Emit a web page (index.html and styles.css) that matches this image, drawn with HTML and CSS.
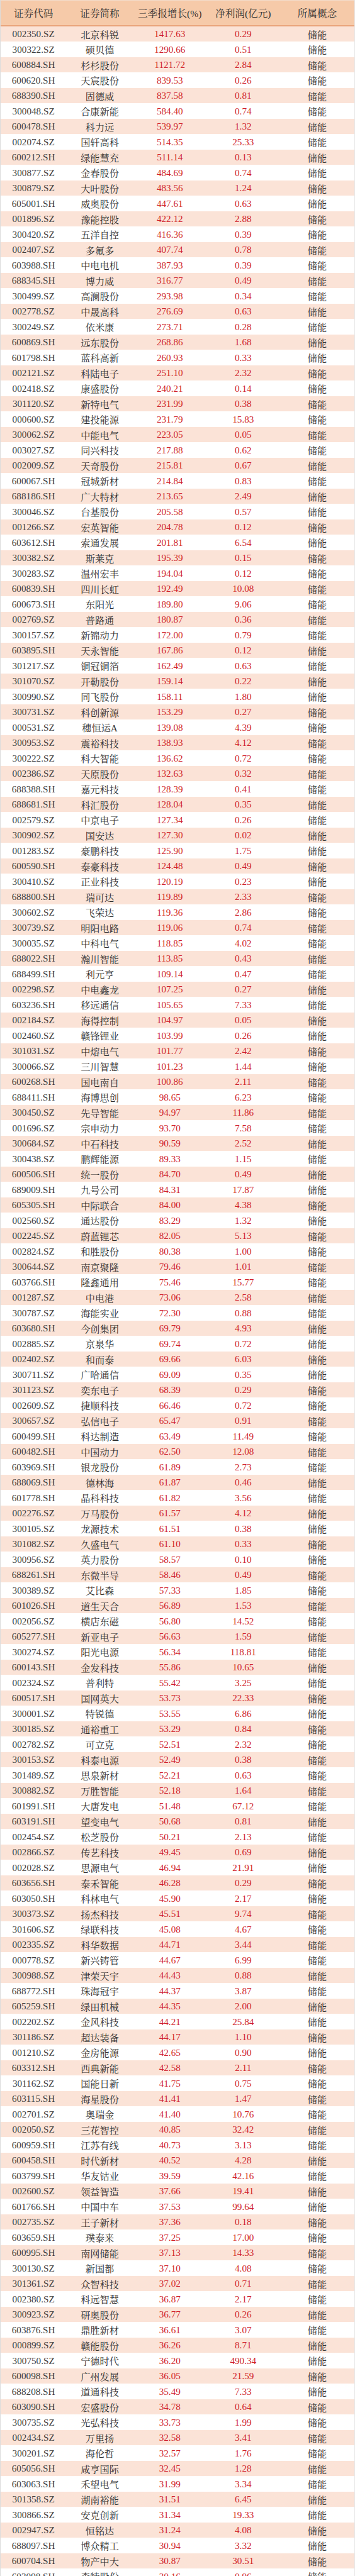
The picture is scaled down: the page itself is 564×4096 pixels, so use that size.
FILE: index.html
```html
<!DOCTYPE html>
<html lang="zh-CN">
<head>
<meta charset="utf-8">
<title>储能概念 三季报增长</title>
<link rel="stylesheet" href="styles.css">
</head>
<body>
<div class="page">
<div class="table">
<div class="head"><span>证券代码</span><span>证券简称</span><span>三季报增长(%)</span><span>净利润(亿元)</span><span>所属概念</span></div>
<div class="body">
<div class="r"><span>002350.SZ</span><span>北京科锐</span><span>1417.63</span><span>0.29</span><span>储能</span></div>
<div class="r"><span>300322.SZ</span><span>硕贝德</span><span>1290.66</span><span>0.51</span><span>储能</span></div>
<div class="r"><span>600884.SH</span><span>杉杉股份</span><span>1121.72</span><span>2.84</span><span>储能</span></div>
<div class="r"><span>600620.SH</span><span>天宸股份</span><span>839.53</span><span>0.26</span><span>储能</span></div>
<div class="r"><span>688390.SH</span><span>固德威</span><span>837.58</span><span>0.81</span><span>储能</span></div>
<div class="r"><span>300048.SZ</span><span>合康新能</span><span>584.40</span><span>0.74</span><span>储能</span></div>
<div class="r"><span>600478.SH</span><span>科力远</span><span>539.97</span><span>1.32</span><span>储能</span></div>
<div class="r"><span>002074.SZ</span><span>国轩高科</span><span>514.35</span><span>25.33</span><span>储能</span></div>
<div class="r"><span>600212.SH</span><span>绿能慧充</span><span>511.14</span><span>0.13</span><span>储能</span></div>
<div class="r"><span>300877.SZ</span><span>金春股份</span><span>484.69</span><span>0.74</span><span>储能</span></div>
<div class="r"><span>300879.SZ</span><span>大叶股份</span><span>483.56</span><span>1.24</span><span>储能</span></div>
<div class="r"><span>605001.SH</span><span>威奥股份</span><span>447.61</span><span>0.63</span><span>储能</span></div>
<div class="r"><span>001896.SZ</span><span>豫能控股</span><span>422.12</span><span>2.88</span><span>储能</span></div>
<div class="r"><span>300420.SZ</span><span>五洋自控</span><span>416.36</span><span>0.39</span><span>储能</span></div>
<div class="r"><span>002407.SZ</span><span>多氟多</span><span>407.74</span><span>0.78</span><span>储能</span></div>
<div class="r"><span>603988.SH</span><span>中电电机</span><span>387.93</span><span>0.39</span><span>储能</span></div>
<div class="r"><span>688345.SH</span><span>博力威</span><span>316.77</span><span>0.49</span><span>储能</span></div>
<div class="r"><span>300499.SZ</span><span>高澜股份</span><span>293.98</span><span>0.34</span><span>储能</span></div>
<div class="r"><span>002778.SZ</span><span>中晟高科</span><span>276.69</span><span>0.63</span><span>储能</span></div>
<div class="r"><span>300249.SZ</span><span>依米康</span><span>273.71</span><span>0.28</span><span>储能</span></div>
<div class="r"><span>600869.SH</span><span>远东股份</span><span>268.86</span><span>1.68</span><span>储能</span></div>
<div class="r"><span>601798.SH</span><span>蓝科高新</span><span>260.93</span><span>0.33</span><span>储能</span></div>
<div class="r"><span>002121.SZ</span><span>科陆电子</span><span>251.10</span><span>2.32</span><span>储能</span></div>
<div class="r"><span>002418.SZ</span><span>康盛股份</span><span>240.21</span><span>0.14</span><span>储能</span></div>
<div class="r"><span>301120.SZ</span><span>新特电气</span><span>231.99</span><span>0.38</span><span>储能</span></div>
<div class="r"><span>000600.SZ</span><span>建投能源</span><span>231.79</span><span>15.83</span><span>储能</span></div>
<div class="r"><span>300062.SZ</span><span>中能电气</span><span>223.05</span><span>0.05</span><span>储能</span></div>
<div class="r"><span>003027.SZ</span><span>同兴科技</span><span>217.88</span><span>0.62</span><span>储能</span></div>
<div class="r"><span>002009.SZ</span><span>天奇股份</span><span>215.81</span><span>0.67</span><span>储能</span></div>
<div class="r"><span>600067.SH</span><span>冠城新材</span><span>214.84</span><span>0.83</span><span>储能</span></div>
<div class="r"><span>688186.SH</span><span>广大特材</span><span>213.65</span><span>2.49</span><span>储能</span></div>
<div class="r"><span>300046.SZ</span><span>台基股份</span><span>205.58</span><span>0.57</span><span>储能</span></div>
<div class="r"><span>001266.SZ</span><span>宏英智能</span><span>204.78</span><span>0.12</span><span>储能</span></div>
<div class="r"><span>603612.SH</span><span>索通发展</span><span>201.81</span><span>6.54</span><span>储能</span></div>
<div class="r"><span>300382.SZ</span><span>斯莱克</span><span>195.39</span><span>0.15</span><span>储能</span></div>
<div class="r"><span>300283.SZ</span><span>温州宏丰</span><span>194.04</span><span>0.12</span><span>储能</span></div>
<div class="r"><span>600839.SH</span><span>四川长虹</span><span>192.49</span><span>10.08</span><span>储能</span></div>
<div class="r"><span>600673.SH</span><span>东阳光</span><span>189.80</span><span>9.06</span><span>储能</span></div>
<div class="r"><span>002769.SZ</span><span>普路通</span><span>180.87</span><span>0.36</span><span>储能</span></div>
<div class="r"><span>300157.SZ</span><span>新锦动力</span><span>172.00</span><span>0.79</span><span>储能</span></div>
<div class="r"><span>603895.SH</span><span>天永智能</span><span>167.86</span><span>0.12</span><span>储能</span></div>
<div class="r"><span>301217.SZ</span><span>铜冠铜箔</span><span>162.49</span><span>0.63</span><span>储能</span></div>
<div class="r"><span>301070.SZ</span><span>开勒股份</span><span>159.14</span><span>0.22</span><span>储能</span></div>
<div class="r"><span>300990.SZ</span><span>同飞股份</span><span>158.11</span><span>1.80</span><span>储能</span></div>
<div class="r"><span>300731.SZ</span><span>科创新源</span><span>153.29</span><span>0.27</span><span>储能</span></div>
<div class="r"><span>000531.SZ</span><span>穗恒运A</span><span>139.08</span><span>4.39</span><span>储能</span></div>
<div class="r"><span>300953.SZ</span><span>震裕科技</span><span>138.93</span><span>4.12</span><span>储能</span></div>
<div class="r"><span>300222.SZ</span><span>科大智能</span><span>136.62</span><span>0.72</span><span>储能</span></div>
<div class="r"><span>002386.SZ</span><span>天原股份</span><span>132.63</span><span>0.32</span><span>储能</span></div>
<div class="r"><span>688388.SH</span><span>嘉元科技</span><span>128.39</span><span>0.41</span><span>储能</span></div>
<div class="r"><span>688681.SH</span><span>科汇股份</span><span>128.04</span><span>0.35</span><span>储能</span></div>
<div class="r"><span>002579.SZ</span><span>中京电子</span><span>127.34</span><span>0.26</span><span>储能</span></div>
<div class="r"><span>300902.SZ</span><span>国安达</span><span>127.30</span><span>0.02</span><span>储能</span></div>
<div class="r"><span>001283.SZ</span><span>豪鹏科技</span><span>125.90</span><span>1.75</span><span>储能</span></div>
<div class="r"><span>600590.SH</span><span>泰豪科技</span><span>124.48</span><span>0.49</span><span>储能</span></div>
<div class="r"><span>300410.SZ</span><span>正业科技</span><span>120.19</span><span>0.23</span><span>储能</span></div>
<div class="r"><span>688800.SH</span><span>瑞可达</span><span>119.89</span><span>2.33</span><span>储能</span></div>
<div class="r"><span>300602.SZ</span><span>飞荣达</span><span>119.36</span><span>2.86</span><span>储能</span></div>
<div class="r"><span>300739.SZ</span><span>明阳电路</span><span>119.06</span><span>0.74</span><span>储能</span></div>
<div class="r"><span>300035.SZ</span><span>中科电气</span><span>118.85</span><span>4.02</span><span>储能</span></div>
<div class="r"><span>688022.SH</span><span>瀚川智能</span><span>113.85</span><span>0.43</span><span>储能</span></div>
<div class="r"><span>688499.SH</span><span>利元亨</span><span>109.14</span><span>0.47</span><span>储能</span></div>
<div class="r"><span>002298.SZ</span><span>中电鑫龙</span><span>107.25</span><span>0.27</span><span>储能</span></div>
<div class="r"><span>603236.SH</span><span>移远通信</span><span>105.65</span><span>7.33</span><span>储能</span></div>
<div class="r"><span>002184.SZ</span><span>海得控制</span><span>104.97</span><span>0.05</span><span>储能</span></div>
<div class="r"><span>002460.SZ</span><span>赣锋锂业</span><span>103.99</span><span>0.26</span><span>储能</span></div>
<div class="r"><span>301031.SZ</span><span>中熔电气</span><span>101.77</span><span>2.42</span><span>储能</span></div>
<div class="r"><span>300066.SZ</span><span>三川智慧</span><span>101.23</span><span>1.44</span><span>储能</span></div>
<div class="r"><span>600268.SH</span><span>国电南自</span><span>100.86</span><span>2.11</span><span>储能</span></div>
<div class="r"><span>688411.SH</span><span>海博思创</span><span>98.65</span><span>6.23</span><span>储能</span></div>
<div class="r"><span>300450.SZ</span><span>先导智能</span><span>94.97</span><span>11.86</span><span>储能</span></div>
<div class="r"><span>001696.SZ</span><span>宗申动力</span><span>93.70</span><span>7.58</span><span>储能</span></div>
<div class="r"><span>300684.SZ</span><span>中石科技</span><span>90.59</span><span>2.52</span><span>储能</span></div>
<div class="r"><span>300438.SZ</span><span>鹏辉能源</span><span>89.33</span><span>1.15</span><span>储能</span></div>
<div class="r"><span>600506.SH</span><span>统一股份</span><span>84.70</span><span>0.49</span><span>储能</span></div>
<div class="r"><span>689009.SH</span><span>九号公司</span><span>84.31</span><span>17.87</span><span>储能</span></div>
<div class="r"><span>605305.SH</span><span>中际联合</span><span>84.00</span><span>4.38</span><span>储能</span></div>
<div class="r"><span>002560.SZ</span><span>通达股份</span><span>83.29</span><span>1.32</span><span>储能</span></div>
<div class="r"><span>002245.SZ</span><span>蔚蓝锂芯</span><span>82.05</span><span>5.13</span><span>储能</span></div>
<div class="r"><span>002824.SZ</span><span>和胜股份</span><span>80.38</span><span>1.00</span><span>储能</span></div>
<div class="r"><span>300644.SZ</span><span>南京聚隆</span><span>79.46</span><span>1.01</span><span>储能</span></div>
<div class="r"><span>603766.SH</span><span>隆鑫通用</span><span>75.46</span><span>15.77</span><span>储能</span></div>
<div class="r"><span>001287.SZ</span><span>中电港</span><span>73.06</span><span>2.58</span><span>储能</span></div>
<div class="r"><span>300787.SZ</span><span>海能实业</span><span>72.30</span><span>0.88</span><span>储能</span></div>
<div class="r"><span>603680.SH</span><span>今创集团</span><span>69.79</span><span>4.93</span><span>储能</span></div>
<div class="r"><span>002885.SZ</span><span>京泉华</span><span>69.74</span><span>0.72</span><span>储能</span></div>
<div class="r"><span>002402.SZ</span><span>和而泰</span><span>69.66</span><span>6.03</span><span>储能</span></div>
<div class="r"><span>300711.SZ</span><span>广哈通信</span><span>69.09</span><span>0.35</span><span>储能</span></div>
<div class="r"><span>301123.SZ</span><span>奕东电子</span><span>68.39</span><span>0.29</span><span>储能</span></div>
<div class="r"><span>002609.SZ</span><span>捷顺科技</span><span>66.46</span><span>0.72</span><span>储能</span></div>
<div class="r"><span>300657.SZ</span><span>弘信电子</span><span>65.47</span><span>0.91</span><span>储能</span></div>
<div class="r"><span>600499.SH</span><span>科达制造</span><span>63.49</span><span>11.49</span><span>储能</span></div>
<div class="r"><span>600482.SH</span><span>中国动力</span><span>62.50</span><span>12.08</span><span>储能</span></div>
<div class="r"><span>603969.SH</span><span>银龙股份</span><span>61.89</span><span>2.73</span><span>储能</span></div>
<div class="r"><span>688069.SH</span><span>德林海</span><span>61.87</span><span>0.46</span><span>储能</span></div>
<div class="r"><span>601778.SH</span><span>晶科科技</span><span>61.82</span><span>3.56</span><span>储能</span></div>
<div class="r"><span>002276.SZ</span><span>万马股份</span><span>61.57</span><span>4.12</span><span>储能</span></div>
<div class="r"><span>300105.SZ</span><span>龙源技术</span><span>61.51</span><span>0.38</span><span>储能</span></div>
<div class="r"><span>301082.SZ</span><span>久盛电气</span><span>61.10</span><span>0.33</span><span>储能</span></div>
<div class="r"><span>300956.SZ</span><span>英力股份</span><span>58.57</span><span>0.10</span><span>储能</span></div>
<div class="r"><span>688261.SH</span><span>东微半导</span><span>58.46</span><span>0.49</span><span>储能</span></div>
<div class="r"><span>300389.SZ</span><span>艾比森</span><span>57.33</span><span>1.85</span><span>储能</span></div>
<div class="r"><span>601026.SH</span><span>道生天合</span><span>56.89</span><span>1.53</span><span>储能</span></div>
<div class="r"><span>002056.SZ</span><span>横店东磁</span><span>56.80</span><span>14.52</span><span>储能</span></div>
<div class="r"><span>605277.SH</span><span>新亚电子</span><span>56.63</span><span>1.59</span><span>储能</span></div>
<div class="r"><span>300274.SZ</span><span>阳光电源</span><span>56.34</span><span>118.81</span><span>储能</span></div>
<div class="r"><span>600143.SH</span><span>金发科技</span><span>55.86</span><span>10.65</span><span>储能</span></div>
<div class="r"><span>002324.SZ</span><span>普利特</span><span>55.42</span><span>3.25</span><span>储能</span></div>
<div class="r"><span>600517.SH</span><span>国网英大</span><span>53.73</span><span>22.33</span><span>储能</span></div>
<div class="r"><span>300001.SZ</span><span>特锐德</span><span>53.55</span><span>6.86</span><span>储能</span></div>
<div class="r"><span>300185.SZ</span><span>通裕重工</span><span>53.29</span><span>0.84</span><span>储能</span></div>
<div class="r"><span>002782.SZ</span><span>可立克</span><span>52.51</span><span>2.32</span><span>储能</span></div>
<div class="r"><span>300153.SZ</span><span>科泰电源</span><span>52.49</span><span>0.38</span><span>储能</span></div>
<div class="r"><span>301489.SZ</span><span>思泉新材</span><span>52.21</span><span>0.63</span><span>储能</span></div>
<div class="r"><span>300882.SZ</span><span>万胜智能</span><span>52.18</span><span>1.64</span><span>储能</span></div>
<div class="r"><span>601991.SH</span><span>大唐发电</span><span>51.48</span><span>67.12</span><span>储能</span></div>
<div class="r"><span>603191.SH</span><span>望变电气</span><span>50.68</span><span>0.81</span><span>储能</span></div>
<div class="r"><span>002454.SZ</span><span>松芝股份</span><span>50.21</span><span>2.13</span><span>储能</span></div>
<div class="r"><span>002866.SZ</span><span>传艺科技</span><span>49.45</span><span>0.69</span><span>储能</span></div>
<div class="r"><span>002028.SZ</span><span>思源电气</span><span>46.94</span><span>21.91</span><span>储能</span></div>
<div class="r"><span>603656.SH</span><span>泰禾智能</span><span>46.28</span><span>0.29</span><span>储能</span></div>
<div class="r"><span>603050.SH</span><span>科林电气</span><span>45.90</span><span>2.17</span><span>储能</span></div>
<div class="r"><span>300373.SZ</span><span>扬杰科技</span><span>45.51</span><span>9.74</span><span>储能</span></div>
<div class="r"><span>301606.SZ</span><span>绿联科技</span><span>45.08</span><span>4.67</span><span>储能</span></div>
<div class="r"><span>002335.SZ</span><span>科华数据</span><span>44.71</span><span>3.44</span><span>储能</span></div>
<div class="r"><span>000778.SZ</span><span>新兴铸管</span><span>44.67</span><span>6.99</span><span>储能</span></div>
<div class="r"><span>300988.SZ</span><span>津荣天宇</span><span>44.43</span><span>0.88</span><span>储能</span></div>
<div class="r"><span>688772.SH</span><span>珠海冠宇</span><span>44.37</span><span>3.87</span><span>储能</span></div>
<div class="r"><span>605259.SH</span><span>绿田机械</span><span>44.35</span><span>2.00</span><span>储能</span></div>
<div class="r"><span>002202.SZ</span><span>金风科技</span><span>44.21</span><span>25.84</span><span>储能</span></div>
<div class="r"><span>301186.SZ</span><span>超达装备</span><span>44.17</span><span>1.10</span><span>储能</span></div>
<div class="r"><span>001210.SZ</span><span>金房能源</span><span>42.65</span><span>0.90</span><span>储能</span></div>
<div class="r"><span>603312.SH</span><span>西典新能</span><span>42.58</span><span>2.11</span><span>储能</span></div>
<div class="r"><span>301162.SZ</span><span>国能日新</span><span>41.75</span><span>0.75</span><span>储能</span></div>
<div class="r"><span>603115.SH</span><span>海星股份</span><span>41.41</span><span>1.47</span><span>储能</span></div>
<div class="r"><span>002701.SZ</span><span>奥瑞金</span><span>41.40</span><span>10.76</span><span>储能</span></div>
<div class="r"><span>002050.SZ</span><span>三花智控</span><span>40.85</span><span>32.42</span><span>储能</span></div>
<div class="r"><span>600959.SH</span><span>江苏有线</span><span>40.73</span><span>3.13</span><span>储能</span></div>
<div class="r"><span>600458.SH</span><span>时代新材</span><span>40.52</span><span>4.28</span><span>储能</span></div>
<div class="r"><span>603799.SH</span><span>华友钴业</span><span>39.59</span><span>42.16</span><span>储能</span></div>
<div class="r"><span>002600.SZ</span><span>领益智造</span><span>37.66</span><span>19.41</span><span>储能</span></div>
<div class="r"><span>601766.SH</span><span>中国中车</span><span>37.53</span><span>99.64</span><span>储能</span></div>
<div class="r"><span>002735.SZ</span><span>王子新材</span><span>37.36</span><span>0.18</span><span>储能</span></div>
<div class="r"><span>603659.SH</span><span>璞泰来</span><span>37.25</span><span>17.00</span><span>储能</span></div>
<div class="r"><span>600995.SH</span><span>南网储能</span><span>37.13</span><span>14.33</span><span>储能</span></div>
<div class="r"><span>300130.SZ</span><span>新国都</span><span>37.10</span><span>4.08</span><span>储能</span></div>
<div class="r"><span>301361.SZ</span><span>众智科技</span><span>37.02</span><span>0.71</span><span>储能</span></div>
<div class="r"><span>002380.SZ</span><span>科远智慧</span><span>36.87</span><span>2.17</span><span>储能</span></div>
<div class="r"><span>300923.SZ</span><span>研奥股份</span><span>36.77</span><span>0.26</span><span>储能</span></div>
<div class="r"><span>603876.SH</span><span>鼎胜新材</span><span>36.61</span><span>3.07</span><span>储能</span></div>
<div class="r"><span>000899.SZ</span><span>赣能股份</span><span>36.26</span><span>8.71</span><span>储能</span></div>
<div class="r"><span>300750.SZ</span><span>宁德时代</span><span>36.20</span><span>490.34</span><span>储能</span></div>
<div class="r"><span>600098.SH</span><span>广州发展</span><span>36.05</span><span>21.59</span><span>储能</span></div>
<div class="r"><span>688208.SH</span><span>道通科技</span><span>35.49</span><span>7.33</span><span>储能</span></div>
<div class="r"><span>603090.SH</span><span>宏盛股份</span><span>34.78</span><span>0.64</span><span>储能</span></div>
<div class="r"><span>300735.SZ</span><span>光弘科技</span><span>33.73</span><span>1.99</span><span>储能</span></div>
<div class="r"><span>002434.SZ</span><span>万里扬</span><span>32.58</span><span>3.41</span><span>储能</span></div>
<div class="r"><span>300201.SZ</span><span>海伦哲</span><span>32.57</span><span>1.76</span><span>储能</span></div>
<div class="r"><span>605056.SH</span><span>咸亨国际</span><span>32.45</span><span>1.28</span><span>储能</span></div>
<div class="r"><span>603063.SH</span><span>禾望电气</span><span>31.99</span><span>3.34</span><span>储能</span></div>
<div class="r"><span>301358.SZ</span><span>湖南裕能</span><span>31.51</span><span>6.45</span><span>储能</span></div>
<div class="r"><span>300866.SZ</span><span>安克创新</span><span>31.34</span><span>19.33</span><span>储能</span></div>
<div class="r"><span>002947.SZ</span><span>恒铭达</span><span>31.24</span><span>4.08</span><span>储能</span></div>
<div class="r"><span>688097.SH</span><span>博众精工</span><span>30.94</span><span>3.32</span><span>储能</span></div>
<div class="r"><span>600704.SH</span><span>物产中大</span><span>30.87</span><span>30.51</span><span>储能</span></div>
<div class="r"><span>603098.SH</span><span>森特股份</span><span>30.16</span><span>0.96</span><span>储能</span></div>
</div>
</div>
</div>
</body>
</html>
```

FILE: styles.css
```css
html, body {
  margin: 0;
  padding: 0;
  background: #ffffff;
}

.page {
  width: 564px;
  height: 4096px;
  overflow: hidden;
}

.table {
  width: 564px;
  box-sizing: border-box;
  border-left: 1px solid #dcdcdc;
  border-right: 1px solid #e6e6e6;
  font-family: "Liberation Serif", "Noto Serif CJK SC", "Noto Sans CJK SC", serif;
}

.head,
.r {
  display: grid;
  grid-template-columns: 196fr 200fr 218fr 220fr 222fr;
  align-items: center;
  text-align: center;
}

.head {
  height: 41.9px;
  box-sizing: border-box;
  background: #f6caa9;
  border-top: 1px solid #f3dccb;
  border-bottom: 2px solid #e9a47a;
  color: #2f2f2f;
  font-size: 15.6px;
}

.r {
  height: 24.51px;
  font-size: 15.2px;
  color: #2b2b2b;
}

.body .r:nth-child(odd) {
  background: #fbe3d7;
}

.body .r:nth-child(even) {
  background: #ffffff;
}

.r span:nth-child(1) {
  color: #3e3e3e;
}

.r span:nth-child(3),
.r span:nth-child(4) {
  color: #d01f2b;
}

.r span:nth-child(5) {
  color: #333333;
}
```
